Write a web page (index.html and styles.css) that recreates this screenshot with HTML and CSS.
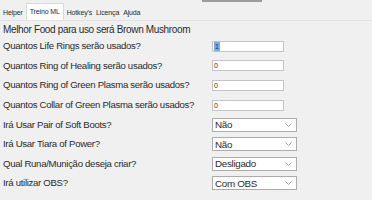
FILE: index.html
```html
<!DOCTYPE html>
<html>
<head>
  <meta charset="utf-8">
  <link rel="stylesheet" href="styles.css">
</head>
<body>
  <div class="topbar"></div>

  <div class="tabs">
    <div class="tab">Helper</div>
    <div class="tab active">Treino ML</div>
    <div class="tab">Hotkey's</div>
    <div class="tab">Licença</div>
    <div class="tab">Ajuda</div>
  </div>

  <div class="panel">
    <div class="food">Melhor Food para uso será Brown Mushroom</div>

    <div class="form">
      <label class="field-label">Quantos Life Rings serão usados?</label>
      <div class="text-box"><span class="sel-text">1</span></div>

      <label class="field-label">Quantos Ring of Healing serão usados?</label>
      <div class="text-box">0</div>

      <label class="field-label">Quantos Ring of Green Plasma serão usados?</label>
      <div class="text-box">0</div>

      <label class="field-label">Quantos Collar of Green Plasma serão usados?</label>
      <div class="text-box">0</div>

      <label class="field-label">Irá Usar Pair of Soft Boots?</label>
      <div class="combo">
        <span>Não</span>
        <svg class="chevron" width="7" height="4" viewBox="0 0 7 4"><polyline points="0.5,0.5 3.5,3.5 6.5,0.5" fill="none" stroke="#a4a4a4" stroke-width="1"/></svg>
      </div>

      <label class="field-label">Irá Usar Tiara of Power?</label>
      <div class="combo">
        <span>Não</span>
        <svg class="chevron" width="7" height="4" viewBox="0 0 7 4"><polyline points="0.5,0.5 3.5,3.5 6.5,0.5" fill="none" stroke="#a4a4a4" stroke-width="1"/></svg>
      </div>

      <label class="field-label">Qual Runa/Munição deseja criar?</label>
      <div class="combo">
        <span>Desligado</span>
        <svg class="chevron" width="7" height="4" viewBox="0 0 7 4"><polyline points="0.5,0.5 3.5,3.5 6.5,0.5" fill="none" stroke="#a4a4a4" stroke-width="1"/></svg>
      </div>

      <label class="field-label">Irá utilizar OBS?</label>
      <div class="combo">
        <span>Com OBS</span>
        <svg class="chevron" width="7" height="4" viewBox="0 0 7 4"><polyline points="0.5,0.5 3.5,3.5 6.5,0.5" fill="none" stroke="#a4a4a4" stroke-width="1"/></svg>
      </div>
    </div>
  </div>
</body>
</html>
```

FILE: styles.css
```css
body {
  width: 372px;
  height: 200px;
  margin: 0;
  padding: 0;
  overflow: hidden;
  background: #f0f0f0;
  color: #2b2b2b;
  font-family: "Liberation Sans", Arial, sans-serif;
}

.topbar {
  width: 60px;
  height: 2px;
  margin-left: 202px;
  background: #9c9c9c;
}

.tabs {
  display: flex;
  align-items: flex-end;
  height: 18px;
  padding-left: 1px;
}

.tab {
  height: 14px;
  padding: 0 2px;
  font-size: 7px;
  line-height: 13px;
  letter-spacing: -0.15px;
  color: #2b2b2b;
}

.tab.active {
  height: 17px;
  margin: 0 1px;
  padding: 0 3px;
  line-height: 15px;
  background: #fff;
  border: 1px solid #dadada;
  border-bottom: none;
  box-sizing: border-box;
}

.panel {
  padding-top: 2px;
  border-top: 1px solid #e2e2e2;
}

.food {
  padding-left: 3px;
  height: 13px;
  font-size: 10px;
  line-height: 13px;
  letter-spacing: -0.35px;
  margin-bottom: 0.5px;
}

.form {
  display: grid;
  grid-template-columns: 212px auto;
  grid-auto-rows: 19.6px;
  align-items: center;
}

.field-label {
  padding-left: 3px;
  font-size: 9.6px;
  letter-spacing: -0.3px;
  white-space: nowrap;
  margin-top: -1px;
}

.text-box {
  width: 72px;
  height: 11px;
  box-sizing: border-box;
  padding-left: 1px;
  background: #fff;
  border: 1px solid #c4c4c4;
  font-size: 7px;
  line-height: 9px;
  color: #333;
}

.sel-text {
  display: inline-block;
  padding: 0 1px;
  background: #78ace4;
  color: #163a66;
}

.combo {
  display: flex;
  align-items: center;
  justify-content: space-between;
  width: 85px;
  height: 14px;
  box-sizing: border-box;
  padding: 0 4px 0 2px;
  background: #fff;
  border: 1px solid #acacac;
  font-size: 9.8px;
  letter-spacing: -0.3px;
  color: #2b2b2b;
}

.chevron {
  display: block;
}
```
